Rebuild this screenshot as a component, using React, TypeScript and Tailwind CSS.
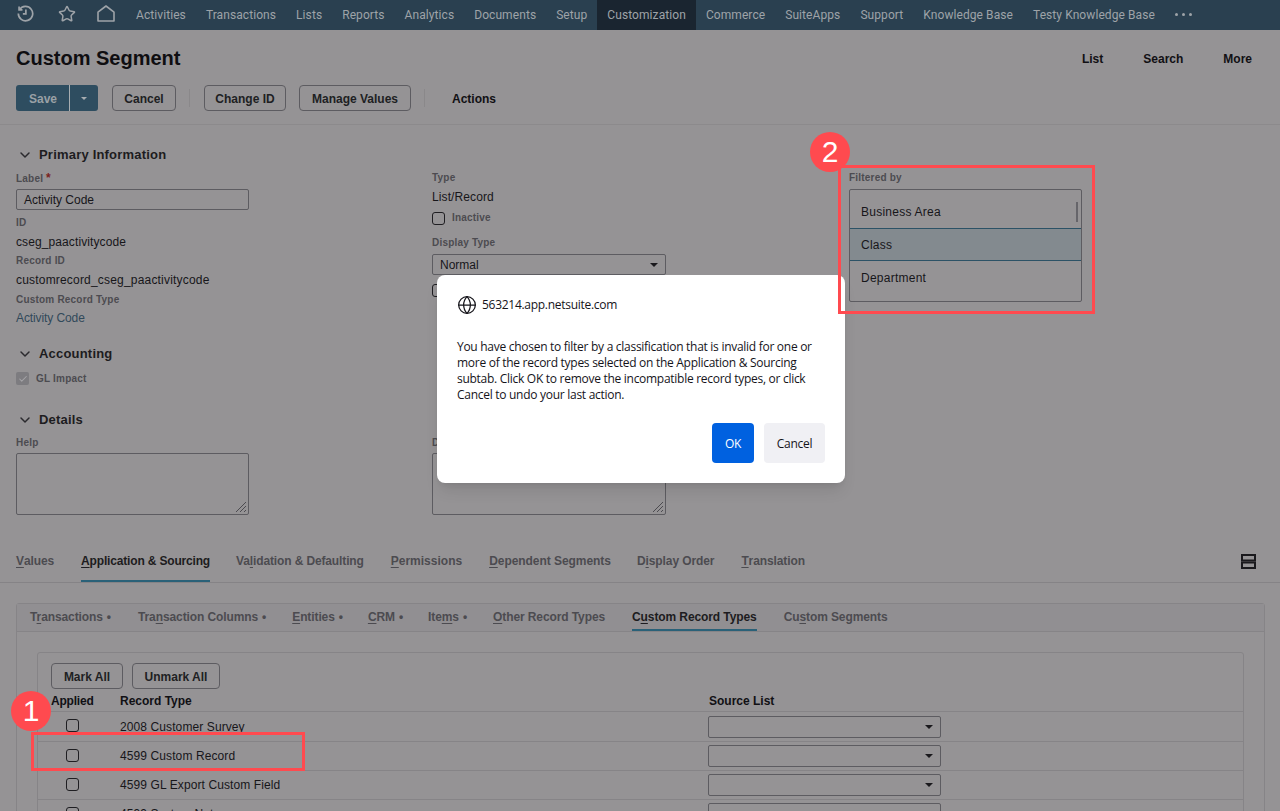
import { Star, Globe, ChevronDown, Check } from "lucide-react";
import type { ReactNode } from "react";

const nav = ["Activities", "Transactions", "Lists", "Reports", "Analytics", "Documents", "Setup", "Customization", "Commerce", "SuiteApps", "Support", "Knowledge Base", "Testy Knowledge Base"];

function FieldLabel({ children, className = "" }: { children: ReactNode; className?: string }) {
  return <div className={`h-[12px] text-[10px] leading-[14px] font-bold text-[#4c4b50] tracking-[0.2px] ${className}`}>{children}</div>;
}
function Value({ children, className = "" }: { children: ReactNode; className?: string }) {
  return <div className={`h-[16px] text-[12px] leading-[18px] text-[#17161a] ${className}`}>{children}</div>;
}
function SectionHead({ title, className = "" }: { title: string; className?: string }) {
  return (
    <div className={`h-[20px] pt-[2px] flex items-center text-[13px] tracking-[0.2px] font-bold text-[#1d1c20] ${className}`}>
      <ChevronDown size={16} strokeWidth={2.2} className="ml-[1px] mr-[6px] text-[#2b2a2e]" />
      {title}
    </div>
  );
}
function Caret() {
  return <span className="w-0 h-0 border-x-[4px] border-x-transparent border-t-[4px] border-t-[#1a191d]" />;
}
function SelectBox({ text = "", className = "" }: { text?: string; className?: string }) {
  return (
    <div className={`h-[21px] w-[233px] border border-[#5d5c61] rounded-[2px] flex items-center justify-between pl-[7px] pr-[7px] text-[12px] text-[#17161a] ${className}`}>
      <span>{text}</span>
      <Caret />
    </div>
  );
}
function Box({ className = "" }: { className?: string }) {
  return <span className={`block w-[13px] h-[13px] border border-[#1f1e22] rounded-[3px] ${className}`} />;
}
function Btn({ children, className = "" }: { children: ReactNode; className?: string }) {
  return <div className={`h-[26px] pt-[1px] border border-[#5d5c61] rounded-[4px] flex items-center justify-center text-[12px] font-bold text-[#201f23] ${className}`}>{children}</div>;
}
function Tab({ children, active, className = "" }: { children: ReactNode; active?: boolean; className?: string }) {
  return <div className={`h-full flex items-center text-[12px] font-bold whitespace-pre underline-offset-2 ${active ? "text-[#1d1c20]" : "text-[#4c4b50]"} ${className}`}>{children}</div>;
}
function Dot() {
  return <span className="ml-[4px] text-[#4c4b50]">•</span>;
}

const rows = [
  { name: "2008 Customer Survey", h: "h-[30px]" },
  { name: "4599 Custom Record", h: "h-[29px]" },
  { name: "4599 GL Export Custom Field", h: "h-[29px]" },
  { name: "4599 System Note", h: "h-[29px]" },
];

export default function App() {
  return (
    <div className="relative w-[1280px] h-[811px] overflow-hidden bg-[#959395] font-['Liberation_Sans',sans-serif]">
      <nav className="h-[30px] bg-[#2a4050] flex items-center pl-[17px] text-[#9ea3a8]">
        <svg width="17" height="17" viewBox="0 0 18 18" fill="none" stroke="currentColor" strokeWidth="1.8" className="mr-[24px] shrink-0 mb-[3px]">
          <path d="M2.6 5A7.6 7.6 0 1 1 1.4 9" />
          <path d="M2.2 1.6v3.6h3.6" />
          <path d="M9.4 4.8v4.6H6.2" />
        </svg>
        <Star size={18} strokeWidth={2} className="mr-[21px] shrink-0 mb-[2px]" />
        <svg width="18" height="17" viewBox="0 0 18 17" fill="none" stroke="currentColor" strokeWidth="1.6" className="mr-[11px] shrink-0 mb-[4px]">
          <path d="M1 16V7.2L9 1l8 6.2V16z" strokeLinejoin="round" />
        </svg>
        {nav.map((n) => (
          <div key={n} className={`h-full flex items-center px-[10px] text-[12px] tracking-[0.08px] font-['Roboto',sans-serif] whitespace-nowrap ${n === "Customization" ? "bg-[#1a2530]" : ""}`}>{n}</div>
        ))}
        <div className="ml-[10px] mb-[2px] flex gap-[4px]">
          <span className="w-[3px] h-[3px] rounded-full bg-[#9ea3a8]" />
          <span className="w-[3px] h-[3px] rounded-full bg-[#9ea3a8]" />
          <span className="w-[3px] h-[3px] rounded-full bg-[#9ea3a8]" />
        </div>
      </nav>

      <header className="h-[55px] flex items-center justify-between px-[16px]">
        <h1 className="text-[20px] font-bold text-[#0f0e11]">Custom Segment</h1>
        <div className="flex gap-[40px] pt-[2px] text-[12px] font-bold text-[#111014] mr-[12px]">
          <span>List</span>
          <span>Search</span>
          <span>More</span>
        </div>
      </header>

      <div className="h-[40px] flex items-start pl-[16px] border-b border-[#8c8a8c]">
        <div className="h-[26px] w-[82px] rounded-[3px] bg-[#2e4d60] flex text-[#9aa1a6] text-[12px] font-bold pt-[1px]">
          <span className="w-[53px] pl-[1px] flex items-center justify-center">Save</span>
          <span className="w-[29px] border-l border-[#a7adb1] -mt-[1px] flex items-center justify-center">
            <span className="w-0 h-0 border-x-[3px] border-x-transparent border-t-[3px] border-t-[#a7adb1]" />
          </span>
        </div>
        <Btn className="ml-[14px] w-[64px]">Cancel</Btn>
        <span className="ml-[13px] mt-[4px] h-[18px] w-px bg-[#8a888a]" />
        <Btn className="ml-[14px] w-[82px]">Change ID</Btn>
        <Btn className="ml-[13px] w-[112px]">Manage Values</Btn>
        <span className="ml-[13px] mt-[4px] h-[18px] w-px bg-[#8a888a]" />
        <div className="ml-[27px] h-[26px] pt-[1px] flex items-center text-[12px] font-bold text-[#111014]">Actions</div>
      </div>

      <section className="h-[418px] flex pl-[16px] pt-[19px]">
        <div className="w-[416px]">
          <SectionHead title="Primary Information" />
          <FieldLabel className="mt-[7px]">Label <span className="text-[#7a1f1f] text-[12px]">*</span></FieldLabel>
          <div className="mt-[6px] h-[21px] w-[233px] border border-[#5d5c61] rounded-[2px] flex items-center pl-[7px]  text-[12px] text-[#17161a]">Activity Code</div>
          <FieldLabel className="mt-[6px]">ID</FieldLabel>
          <Value className="mt-[5px] tracking-[0.1px]">cseg_paactivitycode</Value>
          <FieldLabel className="mt-[5px]">Record ID</FieldLabel>
          <Value className="mt-[5px] tracking-[0.19px]">customrecord_cseg_paactivitycode</Value>
          <FieldLabel className="mt-[6px]">Custom Record Type</FieldLabel>
          <Value className="mt-[4px] !text-[#31495a] tracking-[-0.1px]">Activity Code</Value>
          <SectionHead title="Accounting" className="mt-[18px]" />
          <div className="mt-[9px] h-[13px] flex items-center">
            <span className="w-[13px] h-[13px] rounded-[2px] bg-[#7d7c80] flex items-center justify-center">
              <Check size={10} strokeWidth={2.5} className="text-[#a5a4a7]" />
            </span>
            <FieldLabel className="ml-[7px] !leading-[12px]">GL Impact</FieldLabel>
          </div>
          <SectionHead title="Details" className="mt-[24px]" />
          <FieldLabel className="mt-[7px]">Help</FieldLabel>
          <div className="mt-[5px] h-[62px] w-[233px] border border-[#5d5c61] rounded-[2px] relative">
            <svg width="12" height="12" viewBox="0 0 12 12" stroke="#4c4b50" className="absolute right-[1px] bottom-[1px]">
              <path d="M1 11 11 1M5 11l6-6M9 11l2-2" />
            </svg>
          </div>
        </div>

        <div className="w-[417px] pt-[27px]">
          <FieldLabel>Type</FieldLabel>
          <Value className="mt-[5px] tracking-[0.1px]">List/Record</Value>
          <div className="mt-[8px] h-[13px] flex items-center">
            <Box />
            <FieldLabel className="ml-[7px] !leading-[10px]">Inactive</FieldLabel>
          </div>
          <FieldLabel className="mt-[11px]">Display Type</FieldLabel>
          <SelectBox text="Normal" className="mt-[6px] w-[234px]" />
          <Box className="mt-[9px]" />
          <FieldLabel className="mt-[139px]">Description</FieldLabel>
          <div className="mt-[5px] h-[62px] w-[234px] border border-[#5d5c61] rounded-[2px] relative">
            <svg width="12" height="12" viewBox="0 0 12 12" stroke="#4c4b50" className="absolute right-[1px] bottom-[1px]">
              <path d="M1 11 11 1M5 11l6-6M9 11l2-2" />
            </svg>
          </div>
        </div>

        <div className="w-[233px] pt-[27px]">
          <FieldLabel>Filtered by</FieldLabel>
          <div className="relative mt-[6px] w-[233px] h-[113px] border border-[#5d5c61] rounded-[2px] text-[12px] text-[#17161a] tracking-[0.25px]">
            <div className="h-[38px] pl-[11px] pt-[5px] flex items-center">Business Area</div>
            <div className="h-[33px] pl-[11px] flex items-center bg-[#838a8f] border-y border-[#2c5266]">Class</div>
            <div className="h-[33px] pl-[11px] flex items-center">Department</div>
            <span className="absolute right-[3px] top-[12px] w-[2px] h-[20px] bg-[#66656a]" />
          </div>
        </div>
      </section>

      <div className="h-[40px] flex items-end pl-[16px] pr-[24px] border-b border-[#858386]">
        <div className="h-[39px] flex w-full">
          <Tab className="mr-[27px] pb-[3px] tracking-[-0.1px]"><u>V</u>alues</Tab>
          <Tab active className="mr-[26px] pb-[1px] tracking-[-0.17px] border-b-[2px] border-[#2a6178]"><u>A</u>pplication &amp; Sourcing</Tab>
          <Tab className="mr-[27px] pb-[3px] tracking-[-0.13px]">Va<u>l</u>idation &amp; Defaulting</Tab>
          <Tab className="mr-[27px] pb-[3px]"><u>P</u>ermissions</Tab>
          <Tab className="mr-[26px] pb-[3px] tracking-[-0.05px]"><u>D</u>ependent Segments</Tab>
          <Tab className="mr-[27px] pb-[3px] tracking-[-0.1px]">D<u>i</u>splay Order</Tab>
          <Tab className="pb-[3px] tracking-[-0.1px]"><u>T</u>ranslation</Tab>
          <svg width="15" height="15" viewBox="0 0 15 15" fill="none" stroke="#1a191d" strokeWidth="2" className="ml-auto mt-[11px]">
            <rect x="1" y="1" width="13" height="5.5" />
            <rect x="1" y="8.5" width="13" height="5.5" />
          </svg>
        </div>
      </div>

      <div className="ml-[16px] mt-[20px] w-[1249px] h-[300px] border border-[#868487] rounded-t-[3px]">
        <div className="h-[28px] pl-[13px] flex border-b border-[#868487] bg-[#918f92]">
          <Tab className="mr-[27px] pb-[2px] tracking-[-0.1px]"><span>T<u>r</u>ansactions</span><Dot /></Tab>
          <Tab className="mr-[26px] pb-[2px] tracking-[-0.1px]"><span>Tra<u>n</u>saction Columns</span><Dot /></Tab>
          <Tab className="mr-[25px] pb-[2px] tracking-[-0.1px]"><span><u>E</u>ntities</span><Dot /></Tab>
          <Tab className="mr-[25px] pb-[2px] tracking-[-0.1px]"><span><u>C</u>RM</span><Dot /></Tab>
          <Tab className="mr-[26px] pb-[2px] tracking-[-0.1px]"><span>Ite<u>m</u>s</span><Dot /></Tab>
          <Tab className="mr-[27px] pb-[2px] tracking-[-0.1px]"><u>O</u>ther Record Types</Tab>
          <Tab active className="mr-[27px] tracking-[-0.1px] border-b-[2px] border-[#2a6178]">C<u>u</u>stom Record Types</Tab>
          <Tab className="pb-[2px] tracking-[-0.1px]">Cu<u>s</u>tom Segments</Tab>
        </div>

        <div className="ml-[20px] mt-[20px] w-[1207px] h-[200px] border border-[#868487] rounded-t-[3px]">
          <div className="pl-[13px] pt-[10px] flex gap-[9px]">
            <Btn className="w-[72px]">Mark All</Btn>
            <Btn className="w-[88px]">Unmark All</Btn>
          </div>
          <div className="h-[23px] flex items-end pb-[1px] text-[12px] font-bold text-[#111014] border-b border-[#868487]">
            <span className="ml-[13px] w-[69px] tracking-[-0.2px]">Applied</span>
            <span className="w-[589px]">Record Type</span>
            <span>Source List</span>
          </div>
          {rows.map((r) => (
            <div key={r.name} className={`${r.h} flex items-center border-b border-[#868487] text-[12px] text-[#17161a]`}>
              <span className="ml-[28px] w-[54px] pb-[2px]"><Box /></span>
              <span className="w-[588px] tracking-[0.1px]">{r.name}</span>
              <SelectBox className="!h-[22px]" />
            </div>
          ))}
        </div>
      </div>

      {/* alert dialog over the page */}
      <div className="absolute left-[437px] top-[275px] w-[408px] h-[208px] bg-white rounded-[8px] pl-[20px] pr-[20px] pt-[20px] font-['Open_Sans',sans-serif] text-[#15141a] tracking-[-0.28px] shadow-lg">
        <div className="flex items-center h-[20px] text-[12px]">
          <Globe size={20} strokeWidth={1.5} className="mr-[5px]" />
          563214.app.netsuite.com
        </div>
        <p className="mt-[24px] text-[12px] leading-[16px]">
          You have chosen to filter by a classification that is invalid for one or more of the record types selected on the Application &amp; Sourcing subtab. Click OK to remove the incompatible record types, or click Cancel to undo your last action.
        </p>
        <div className="absolute right-[20px] bottom-[20px] flex gap-[10px] text-[12px]">
          <div className="w-[42px] h-[40px] pt-[1px] rounded-[4px] bg-[#0061e0] text-white flex items-center justify-center">OK</div>
          <div className="w-[61px] h-[40px] pt-[1px] rounded-[4px] bg-[#f0f0f4] flex items-center justify-center">Cancel</div>
        </div>
      </div>

      {/* annotations */}
      <div className="absolute left-[838px] top-[165px] w-[257px] h-[149px] border-[3px] border-[#ff4a4f]" />
      <div className="absolute left-[810px] top-[132px] w-[40px] h-[40px] rounded-full bg-[#ff4a4f] text-white flex items-center justify-center text-[30px] leading-none">2</div>
      <div className="absolute left-[31px] top-[732px] w-[274px] h-[39px] border-[3px] border-[#ff4a4f]" />
      <div className="absolute left-[11px] top-[691px] w-[40px] h-[40px] rounded-full bg-[#ff4a4f] text-white flex items-center justify-center text-[30px] leading-none">1</div>
    </div>
  );
}
